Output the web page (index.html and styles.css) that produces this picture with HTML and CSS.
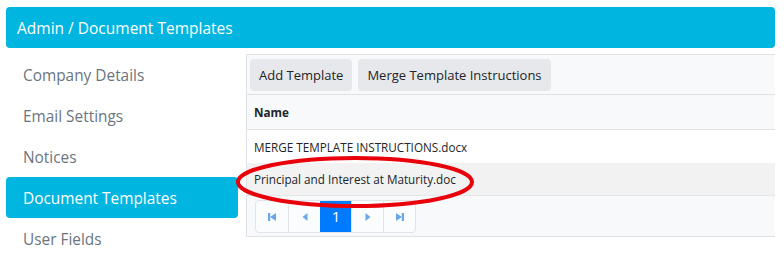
FILE: index.html
```html
<!DOCTYPE html>
<html lang="en">
<head>
    <meta charset="UTF-8">
    <meta name="viewport" content="width=device-width, initial-scale=1.0">
    <title>Admin / Document Templates</title>
    <link rel="stylesheet" href="styles.css">
</head>
<body>
    <header class="page-title">Admin / Document Templates</header>

    <div class="layout">
        <nav class="side-nav">
            <a class="nav-item" href="#">Company Details</a>
            <a class="nav-item" href="#">Email Settings</a>
            <a class="nav-item" href="#">Notices</a>
            <a class="nav-item active" href="#">Document Templates</a>
            <a class="nav-item" href="#">User Fields</a>
        </nav>

        <div class="panel">
            <div class="toolbar">
                <button class="tool-btn">Add Template</button>
                <button class="tool-btn">Merge Template Instructions</button>
            </div>

            <div class="grid-head">Name</div>
            <div class="grid-row">MERGE TEMPLATE INSTRUCTIONS.docx</div>
            <div class="grid-row alt">Principal and Interest at Maturity.doc</div>

            <div class="pager-bar">
                <div class="pager">
                    <span class="page-btn">
                        <svg width="10" height="10" viewBox="0 0 10 10"><rect x="1" y="1" width="2.2" height="8"/><polygon points="9,1 3,5 9,9"/></svg>
                    </span>
                    <span class="page-btn">
                        <svg width="10" height="10" viewBox="0 0 10 10"><polygon points="7.5,1 2.5,5 7.5,9"/></svg>
                    </span>
                    <span class="page-btn current">1</span>
                    <span class="page-btn">
                        <svg width="10" height="10" viewBox="0 0 10 10"><polygon points="2.5,1 7.5,5 2.5,9"/></svg>
                    </span>
                    <span class="page-btn">
                        <svg width="10" height="10" viewBox="0 0 10 10"><polygon points="1,1 7,5 1,9"/><rect x="6.8" y="1" width="2.2" height="8"/></svg>
                    </span>
                </div>
            </div>

            <!-- hand-drawn highlight over the second row -->
            <svg class="highlight" width="250" height="58" viewBox="0 0 250 58">
                <ellipse cx="125" cy="29" rx="117" ry="24" fill="none" stroke="#e8000b" stroke-width="4"/>
            </svg>
        </div>
    </div>
</body>
</html>
```

FILE: styles.css
```css
body {
    font-family: "Open Sans", Arial, sans-serif;
    margin: 0;
    padding: 7px 9px 0 6px;
    background-color: #ffffff;
}

.page-title {
    display: flex;
    align-items: center;
    height: 41px;
    padding-left: 11px;
    background-color: #00b5e0;
    color: white;
    font-size: 15.5px;
    border-radius: 4px;
}

.layout {
    display: flex;
    gap: 8px;
    margin-top: 6px;
}

.side-nav {
    display: flex;
    flex-direction: column;
    width: 232px;
    flex-shrink: 0;
}

.nav-item {
    display: flex;
    align-items: center;
    height: 41px;
    padding: 2px 0 0 17px;
    box-sizing: border-box;
    color: #6c757d;
    font-size: 15.4px;
    text-decoration: none;
    border-radius: 4px;
}

.nav-item.active {
    background-color: #00b5e0;
    color: white;
}

.panel {
    position: relative;
    flex: 1;
    align-self: flex-start;
    border: 1px solid #dee2e6;
    border-right: none;
}

.toolbar {
    display: flex;
    gap: 6px;
    height: 40px;
    padding: 4px 3px;
    box-sizing: border-box;
    background-color: #f8f9fa;
    border-bottom: 1px solid #dfe2e5;
}

.tool-btn {
    height: 32px;
    padding: 0 9px;
    font-family: inherit;
    font-size: 13px;
    color: #212529;
    background-color: #e6e8eb;
    border: none;
    border-radius: 4px;
}

.grid-head,
.grid-row {
    display: flex;
    align-items: center;
    padding-left: 7px;
    box-sizing: border-box;
    font-size: 11.7px;
    color: #212529;
}

.grid-head {
    height: 35px;
    font-weight: bold;
    background-color: #f8f9fa;
    border-bottom: 1px solid #dfe2e5;
}

.grid-row {
    height: 33px;
    background-color: white;
}

.grid-row.alt {
    background-color: #f2f2f2;
    border-bottom: 1px solid #e4e6e8;
}

.pager-bar {
    height: 40px;
    padding: 4px 8px;
    box-sizing: border-box;
    background-color: #f8f9fa;
}

.pager {
    display: inline-flex;
    border: 1px solid #e2e5e8;
    border-radius: 4px;
    background-color: #fbfcfd;
}

.page-btn {
    display: flex;
    align-items: center;
    justify-content: center;
    width: 31px;
    height: 31px;
    border-left: 1px solid #e2e5e8;
    fill: #6aa8ec;
}

.page-btn:first-child {
    border-left: none;
    width: 32px;
}

.page-btn.current {
    background-color: #007bff;
    border-left-color: #007bff;
    color: white;
    font-size: 15px;
    padding-bottom: 2px;
    box-sizing: border-box;
}

.highlight {
    position: absolute;
    left: -17px;
    top: 98px;
}
```
